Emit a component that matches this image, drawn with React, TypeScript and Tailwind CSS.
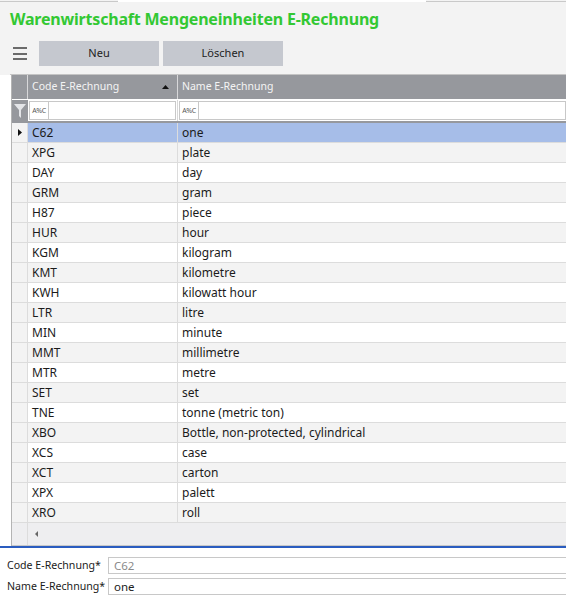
import React from 'react';

const rows: [string, string][] = [
	['C62', 'one'],
	['XPG', 'plate'],
	['DAY', 'day'],
	['GRM', 'gram'],
	['H87', 'piece'],
	['HUR', 'hour'],
	['KGM', 'kilogram'],
	['KMT', 'kilometre'],
	['KWH', 'kilowatt hour'],
	['LTR', 'litre'],
	['MIN', 'minute'],
	['MMT', 'millimetre'],
	['MTR', 'metre'],
	['SET', 'set'],
	['TNE', 'tonne (metric ton)'],
	['XBO', 'Bottle, non-protected, cylindrical'],
	['XCS', 'case'],
	['XCT', 'carton'],
	['XPX', 'palett'],
	['XRO', 'roll'],
];

function FilterCell({ className }: { className?: string }) {
	return (
		<div className={`flex items-center bg-white pl-[1px] ${className ?? ''}`}>
			<div className="flex h-[19px] flex-1 items-center border border-[#c8c8c8] bg-white">
				<span className="flex h-full w-[19px] items-center justify-center border-r border-[#c8c8c8] text-[7px] leading-none tracking-tighter text-[#555]">
					A%C
				</span>
			</div>
		</div>
	);
}

function FunnelIcon() {
	return (
		<svg width="12" height="14" viewBox="0 0 12 14">
			<path d="M0 0 H12 L7 6 V14 L5 12 V6 Z" fill="#e4e5e8" />
		</svg>
	);
}

export default function App() {
	return (
		<div
			className="relative h-[614px] w-[566px] overflow-hidden bg-white text-[#1b1b1b]"
			style={{ fontFamily: '"Noto Sans", "Open Sans", sans-serif' }}
		>
			<div className="bg-[#f3f3f3]">
				<div className="flex h-[2px]">
					<div className="w-[118px] border-b border-[#c9c9c9]" />
					<div className="w-[308px] bg-white" />
					<div className="flex-1 border-b border-[#c9c9c9]" />
				</div>
				<h1 className="flex h-[32px] items-center pl-[10px] pt-[2px] text-[16px] font-bold tracking-[-0.2px] text-[#33c833]">
					Warenwirtschaft Mengeneinheiten E-Rechnung
				</h1>
				<div className="flex h-[40px] items-start gap-[4px] pt-[7px]">
					<div className="flex w-[39px] flex-col items-center gap-[3.5px] pt-[6px]">
						<span className="h-[2px] w-[14px] bg-[#6b6b6b]" />
						<span className="h-[2px] w-[14px] bg-[#6b6b6b]" />
						<span className="h-[2px] w-[14px] bg-[#6b6b6b]" />
					</div>
					<button className="-ml-[4px] h-[25px] w-[120px] bg-[#c5c8cf] text-[11px] text-[#222]">
						Neu
					</button>
					<button className="h-[25px] w-[120px] bg-[#c5c8cf] text-[11px] text-[#222]">
						Löschen
					</button>
				</div>
				<div className="ml-[10px] h-[1px] bg-[#c4c4c4]" />
			</div>

			<div className="ml-[11px] border-l border-[#b4b4b4]">
				<div className="flex h-[24px] bg-[#96989d] text-[10.5px] text-[#f4f4f4]">
					<div className="w-[16px] border-r border-[#d8d8da]" />
					<div className="flex w-[150px] items-center justify-between border-r border-[#d8d8da] pl-[4px] pr-[8px]">
						<span>Code E-Rechnung</span>
						<svg width="7" height="4" viewBox="0 0 7 4">
							<path d="M0 4 L3.5 0 L7 4 Z" fill="#111" />
						</svg>
					</div>
					<div className="flex flex-1 items-center pl-[4px]">Name E-Rechnung</div>
				</div>
				<div className="flex h-[24px] border-t border-white border-b-2 border-b-[#96989d]">
					<div className="flex w-[16px] items-center justify-center bg-[#96989d]">
						<FunnelIcon />
					</div>
					<FilterCell className="w-[150px] border-r border-[#d8d8d8] pr-[1px]" />
					<FilterCell className="flex-1" />
				</div>
				{rows.map(([code, name], i) => {
					const bg = i === 0 ? 'bg-[#a6bde8]' : i % 2 === 1 ? 'bg-[#f3f3f3]' : 'bg-white';
					return (
						<div key={code} className={`flex h-[20px] border-b border-[#dcdcdc] text-[12px] ${bg}`}>
							<div className="flex w-[16px] items-center justify-center border-r border-[#dcdcdc] bg-[#f3f3f3]">
								{i === 0 && (
									<svg width="4" height="7" viewBox="0 0 4 7">
										<path d="M0 0 L4 3.5 L0 7 Z" fill="#111" />
									</svg>
								)}
							</div>
							<div className="flex w-[150px] items-center border-r border-[#dcdcdc] pl-[4px]">{code}</div>
							<div className="flex flex-1 items-center pl-[4px]">{name}</div>
						</div>
					);
				})}
				<div className="flex h-[23px] border-b border-[#c8c8c8] bg-[#eeeef0]">
					<div className="w-[16px] border-r border-[#dcdcdc]" />
					<div className="flex items-center pl-[7px]">
						<svg width="3" height="6" viewBox="0 0 3 6">
							<path d="M3 0 L0 3 L3 6 Z" fill="#666" />
						</svg>
					</div>
				</div>
			</div>
			<div className="h-[2px] bg-[#2a5cbf]" />

			<div className="flex flex-col gap-[4px] pt-[9px] text-[10.6px]">
				<div className="flex items-center">
					<label className="w-[108px] whitespace-nowrap pl-[7px]">Code E-Rechnung*</label>
					<div className="flex h-[17px] flex-1 items-center border-y border-l border-[#c8c8c8] pl-[5px] text-[11.5px] text-[#8a8a8a]">
						C62
					</div>
				</div>
				<div className="flex items-center">
					<label className="w-[108px] whitespace-nowrap pl-[7px]">Name E-Rechnung*</label>
					<div className="flex h-[17px] flex-1 items-center border-y border-l border-[#c8c8c8] pl-[5px] text-[11.5px]">
						one
					</div>
				</div>
			</div>
		</div>
	);
}
